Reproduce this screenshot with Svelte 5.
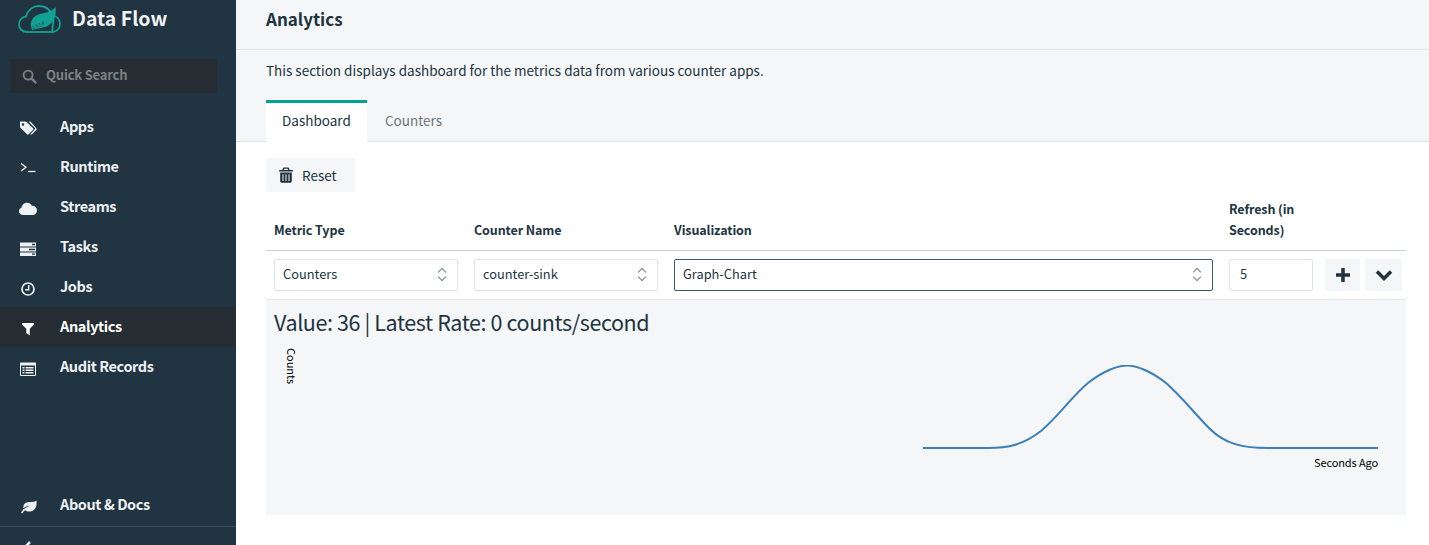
<script>
	const navItems = [
		{ label: 'Apps', icon: 'tags' },
		{ label: 'Runtime', icon: 'terminal' },
		{ label: 'Streams', icon: 'cloud' },
		{ label: 'Tasks', icon: 'tasks' },
		{ label: 'Jobs', icon: 'clock' },
		{ label: 'Analytics', icon: 'filter', active: true },
		{ label: 'Audit Records', icon: 'audit' }
	];
</script>

{#snippet icon(name)}
	<svg class="nav-icon" viewBox="0 0 18 18" aria-hidden="true">
		{#if name === 'tags'}
			<path fill="currentColor" fill-rule="evenodd" d="M1 1.500h5.500c.5 0 .9.2 1.200.5l6.300 6.300c.5.5.5 1.200 0 1.700l-4.300 4.300c-.5.5-1.200.5-1.700 0L1.700 8c-.4-.4-.7-.8-.7-1.300zM4 3.200a1.300 1.300 0 1 0 0 2.600 1.300 1.300 0 0 0 0-2.600z" />
			<path fill="currentColor" d="M9.500 1.500h1.300c.5 0 .9.2 1.200.5l5.300 6.300c.5.5.5 1.200 0 1.700l-4.300 4.300c-.5.5-1.200.5-1.700 0l4.700-5.200c.3-.3.300-.5 0-.8z" />
		{:else if name === 'terminal'}
			<path fill="none" stroke="currentColor" stroke-width="1.300" d="M2 3.500l5 3.700-5 3.700" />
			<path fill="none" stroke="currentColor" stroke-width="1.300" d="M9 11.500h7.500" />
		{:else if name === 'cloud'}
			<path fill="currentColor" d="M4.200 15C1.900 15 0 13.300 0 11.200c0-1.600 1-2.900 2.500-3.400C2.800 5 5.200 2.800 8 2.800c2.200 0 4.100 1.200 4.900 3.100 2.800-.3 5.100 1.800 5.100 4.600 0 2.600-2 4.500-4.500 4.500z" />
		{:else if name === 'tasks'}
			<path fill="currentColor" fill-rule="evenodd" d="M1 2.500h16v4H1zM1 7.500h16v4H1zM1 12.500h16v3.500H1zM13 3.700v1.500h3V3.700zM10 8.700v1.500h6V8.700zM13 13.500v1.300h3v-1.300z" />
		{:else if name === 'clock'}
			<circle cx="9" cy="9" r="6" fill="none" stroke="currentColor" stroke-width="1.700" />
			<path fill="none" stroke="currentColor" stroke-width="1.500" d="M9.700 5v4.700H6.200" />
		{:else if name === 'filter'}
			<path fill="currentColor" d="M3 3h12v1.500L10.800 8.800V15.500L7.300 13V8.800L3 4.500z" />
		{:else if name === 'audit'}
			<path fill="currentColor" fill-rule="evenodd" d="M2 2.500h14c.6 0 1 .4 1 1v11.500c0 .6-.4 1-1 1H2c-.6 0-1-.4-1-1V3.500c0-.6.4-1 1-1zM2 5.500V15h14V5.500zM3.500 7h2v1.500h-2zM6.500 7h8v1.500h-8zM3.500 9.500h2V11h-2zM6.500 9.500h8V11h-8zM3.500 12h2v1.500h-2zM6.500 12h8v1.500h-8z" />
		{:else if name === 'leaf'}
			<path fill="currentColor" d="M17.500 2.500c.5 4.800-.5 8.900-4.500 10.500-2.500 1-5.300.7-7-.8-.9.7-1.800 1.700-2.600 3.100l-1.400-.4c.8-2 2.300-3.700 4.300-5 1.700-1.100 3.500-1.800 5.400-2.300-2.600.2-5.200 1.100-7.300 2.700C3.900 6.800 6 4.400 9.800 4.100c2.900-.2 5.600 0 7.700-1.600z" />
		{/if}
	</svg>
{/snippet}

<div class="shell">
	<aside class="sidebar">
		<div class="brand">
			<svg class="logo" viewBox="0 0 43 28" aria-hidden="true">
				<path fill="none" stroke="#11a294" stroke-width="1.800" d="M9 27C4 27 1 23.500 1 19.500 1 15 4 12 8 11.500 10 5 15 1 21 1c5 0 9 2 11.500 6M36 10.500c3.500 1.500 6 4.500 6 8.500 0 5-4 8-8 8z" />
				<path fill="none" stroke="#11a294" stroke-width="1.800" d="M9 27h25" />
				<path fill="#11a294" d="M37.500 2C39 11 35 18 29 21.500L14 25C11 18 14 11 22 9c6-1 12-3 15.500-7z" />
				<text class="logo-bits" x="12" y="26" transform="rotate(-24 12 26)">01314</text>
			</svg>
			<span class="brand-name">Data Flow</span>
		</div>

		<div class="search">
			<svg class="search-icon" viewBox="0 0 16 16" aria-hidden="true">
				<circle cx="6.500" cy="6.500" r="4.800" fill="none" stroke="currentColor" stroke-width="2" />
				<path stroke="currentColor" stroke-width="2.500" stroke-linecap="round" d="M10.500 10.500l4 4" />
			</svg>
			<span>Quick Search</span>
		</div>

		<nav class="nav">
			{#each navItems as item}
				<a class="nav-item" class:active={item.active} href="#top">
					{@render icon(item.icon)}
					<span>{item.label}</span>
				</a>
			{/each}
		</nav>

		<div class="sidebar-bottom">
			<a class="nav-item" href="#top">
				{@render icon('leaf')}
				<span>About &amp; Docs</span>
			</a>
			<div class="collapse">
				<svg viewBox="0 0 14 14" width="14" height="14" aria-hidden="true">
					<path fill="none" stroke="currentColor" stroke-width="2.500" d="M10 1L4 7l6 6" />
				</svg>
			</div>
		</div>
	</aside>

	<main class="main">
		<header class="page-title">Analytics</header>

		<section class="intro">
			<p>This section displays dashboard for the metrics data from various counter apps.</p>
			<div class="tabs">
				<div class="tab active">Dashboard</div>
				<div class="tab">Counters</div>
			</div>
		</section>

		<section class="content">
			<button class="btn reset">
				<svg viewBox="0 0 14 16" width="14" height="16" aria-hidden="true">
					<path fill="currentColor" fill-rule="evenodd" d="M5 .5h4c.5 0 .9.3 1.100.7L10.700 3H13.300c.4 0 .7.3.7.7v.8H0v-.8c0-.4.3-.7.7-.7h2.600L3.900 1.200C4.100.8 4.500.5 5 .5zM5.200 1.700L4.800 3h4.400l-.4-1.300zM1.200 5.500h11.600v8.800c0 .8-.7 1.500-1.500 1.500H2.700c-.8 0-1.500-.7-1.500-1.500zM3.500 7.200v6.800h1V7.200zM6.500 7.200v6.800h1V7.200zM9.500 7.200v6.800h1V7.200z" />
				</svg>
				Reset
			</button>

			<div class="grid head">
				<div class="cell">Metric Type</div>
				<div class="cell">Counter Name</div>
				<div class="cell">Visualization</div>
				<div class="cell">Refresh (in Seconds)</div>
				<div class="cell"></div>
			</div>

			<div class="grid row">
				<div class="cell"><div class="select">Counters<span class="updown"></span></div></div>
				<div class="cell"><div class="select">counter-sink<span class="updown"></span></div></div>
				<div class="cell"><div class="select focused">Graph-Chart<span class="updown"></span></div></div>
				<div class="cell"><div class="select number">5</div></div>
				<div class="cell actions">
					<button class="btn square" aria-label="Add">
						<svg viewBox="0 0 16 16" width="16" height="16" aria-hidden="true">
							<path stroke="currentColor" stroke-width="3.500" d="M8 1v14M1 8h14" />
						</svg>
					</button>
					<button class="btn square wide" aria-label="Collapse">
						<svg viewBox="0 0 18 12" width="18" height="12" aria-hidden="true">
							<path fill="none" stroke="currentColor" stroke-width="3.500" d="M2 2.500l7 7 7-7" />
						</svg>
					</button>
				</div>
			</div>

			<div class="chart-panel">
				<h3>Value: 36 | Latest Rate: 0 counts/second</h3>
				<div class="chart">
					<span class="y-label">Counts</span>
					<svg class="curve" viewBox="0 0 456 90" width="456" height="90" aria-hidden="true">
						<path fill="none" stroke="#3a7fb8" stroke-width="2" d="M0 83H65C85 83 100 80 118 66C135 52 150 30 165 18C180 6 195 .5 204 .5C213 .5 228 6 243 18C258 31 272 49 287 64C302 79 320 83 345 83H455" />
					</svg>
					<span class="x-label">Seconds Ago</span>
				</div>
			</div>
		</section>
	</main>
</div>

<style>
	:global(body) {
		margin: 0;
		overflow: hidden;
		background: #fff;
		font-family: "Noto Sans CJK SC", "Noto Sans", sans-serif;
		font-size: 13.500px;
		color: #20333f;
	}

	.shell {
		display: flex;
		height: 545px;
		overflow: hidden;
	}

	.sidebar {
		width: 236px;
		flex: none;
		background: #203442;
		color: #f0f3f5;
		overflow: hidden;
	}

	.brand {
		display: flex;
		align-items: center;
		gap: 11px;
		height: 38px;
		padding-left: 18px;
	}

	.logo {
		width: 43px;
		height: 28px;
	}

	.logo-bits {
		font-size: 5px;
		fill: #20333f;
		letter-spacing: 0.6px;
	}

	.brand-name {
		font-size: 19.500px;
		font-weight: 700;
		line-height: 38px;
		padding-bottom: 2px;
	}

	.search {
		display: flex;
		align-items: center;
		gap: 9px;
		height: 34px;
		margin: 21px 19px 14px 10px;
		padding-left: 12px;
		background: #252d32;
		border-radius: 3px;
		color: #7b8184;
		font-size: 13px;
		font-weight: 700;
		letter-spacing: -0.2px;
	}

	.search span {
		padding-bottom: 3px;
	}

	.search-icon {
		width: 15px;
		height: 15px;
	}

	.nav-item {
		display: flex;
		align-items: center;
		height: 40px;
		padding-left: 19px;
		color: #eef1f3;
		font-size: 14.500px;
		font-weight: 700;
		letter-spacing: -0.4px;
		text-decoration: none;
	}

	.nav-item span {
		padding-bottom: 4px;
	}

	.nav-item.active {
		background: #252d32;
		color: #fff;
	}

	.nav-icon {
		width: 18px;
		height: 18px;
		margin: 3px 23px 0 0;
		flex: none;
	}

	.sidebar-bottom {
		margin-top: 97px;
	}

	.sidebar-bottom .nav-item {
		height: 42px;
		border-bottom: 1px solid #3d4c57;
	}

	.collapse {
		padding: 12px 0 0 20px;
	}

	.main {
		flex: 1;
		min-width: 0;
	}

	.page-title {
		height: 50px;
		box-sizing: border-box;
		padding: 5px 30px 0;
		background: #f4f6f8;
		border-bottom: 1px solid #e3e6e9;
		font-size: 17px;
		font-weight: 700;
		line-height: 27px;
	}

	.intro {
		height: 92px;
		box-sizing: border-box;
		padding: 0 30px;
		background: #f4f6f8;
		border-bottom: 1px solid #dfe3e6;
	}

	.intro p {
		margin: 0;
		padding-top: 10px;
		height: 40px;
		line-height: 21px;
	}

	.tabs {
		display: flex;
	}

	.tab {
		padding: 0 18px;
		height: 42px;
		box-sizing: border-box;
		line-height: 40px;
		color: #6d7479;
	}

	.tab.active {
		width: 101px;
		padding: 0 16px;
		background: #fff;
		border-top: 3px solid #00a591;
		line-height: 34px;
		color: #20333f;
	}

	.content {
		padding: 16px 23px 0 30px;
	}

	.btn {
		display: inline-flex;
		align-items: center;
		justify-content: center;
		border: 0;
		border-radius: 2px;
		background: #f4f6f8;
		color: #20333f;
		font: inherit;
		padding: 0;
	}

	.reset {
		width: 89px;
		height: 34px;
		gap: 9px;
		justify-content: flex-start;
		padding-left: 13px;
	}

	.grid {
		display: grid;
		grid-template-columns: 200px 200px 555px 100px 85px;
	}

	.head {
		align-items: end;
		margin-top: 6px;
		padding-bottom: 10px;
		border-bottom: 1px solid #c8d0d4;
		font-size: 12.500px;
		font-weight: 700;
		letter-spacing: -0.1px;
		line-height: 21px;
	}

	.cell {
		padding: 0 8px;
	}

	.row {
		height: 48px;
		align-items: center;
		border-bottom: 1px solid #e3e6e9;
	}

	.select {
		position: relative;
		height: 32px;
		box-sizing: border-box;
		padding-left: 8px;
		border: 1px solid #dfe3e6;
		border-radius: 2px;
		background: #fff;
		font-size: 12.800px;
		line-height: 28px;
	}

	.select.number {
		padding-left: 10px;
	}

	.select.focused {
		border-color: #3d5a6c;
	}

	.updown {
		position: absolute;
		right: 11px;
		top: 8px;
		width: 8px;
		height: 14px;
	}

	.updown::before,
	.updown::after {
		content: "";
		position: absolute;
		left: 1px;
		width: 5px;
		height: 5px;
		border: solid #6d8594;
		border-width: 1px 0 0 1px;
		transform: rotate(45deg);
	}

	.updown::before {
		top: 1px;
	}

	.updown::after {
		top: 6px;
		transform: rotate(225deg);
	}

	.actions {
		display: flex;
		gap: 5px;
		padding: 0 4px;
	}

	.square {
		width: 35px;
		height: 32px;
	}

	.square.wide {
		width: 37px;
	}

	.chart-panel {
		height: 215px;
		padding: 7px 8px 0;
		box-sizing: border-box;
		background: #f4f6f8;
	}

	h3 {
		margin: 0;
		font-size: 21.500px;
		font-weight: 400;
		letter-spacing: -0.4px;
		line-height: 30px;
	}

	.chart {
		position: relative;
		height: 170px;
	}

	.y-label {
		position: absolute;
		left: 10px;
		top: 11px;
		writing-mode: vertical-rl;
		font-size: 11px;
		color: #000;
	}

	.curve {
		position: absolute;
		left: 649px;
		top: 28px;
	}

	.x-label {
		position: absolute;
		left: 1040px;
		top: 117px;
		font-size: 11px;
		letter-spacing: -0.1px;
		color: #000;
	}
</style>
